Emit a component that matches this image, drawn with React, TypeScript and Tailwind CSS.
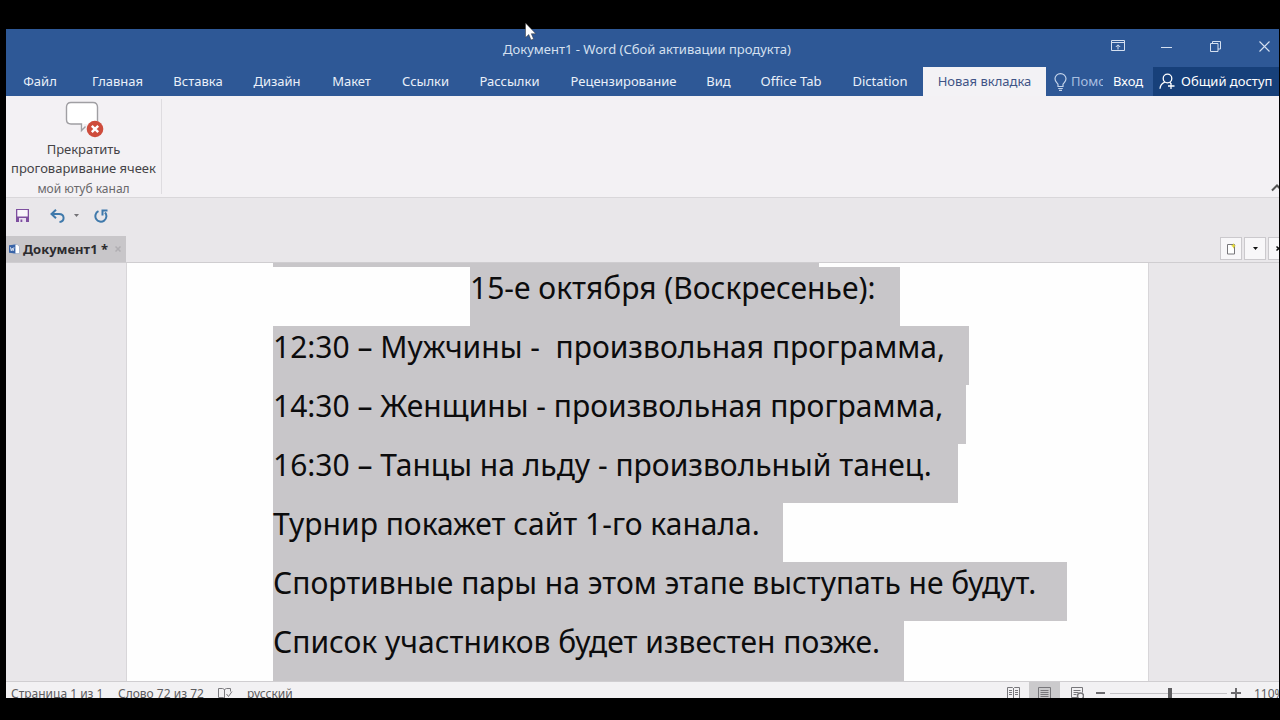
import { useState } from "react";

const tabs = [
  { name: "Файл", width: "w-[68px] mr-[3px]" },
  { name: "Главная", width: "w-[81px]" },
  { name: "Вставка", width: "w-[80px]" },
  { name: "Дизайн", width: "w-[78px]" },
  { name: "Макет", width: "w-[71px]" },
  { name: "Ссылки", width: "w-[77px]" },
  { name: "Рассылки", width: "w-[91px]" },
  { name: "Рецензирование", width: "w-[137px]" },
  { name: "Вид", width: "w-[53px]" },
  { name: "Office Tab", width: "w-[92px]" },
  { name: "Dictation", width: "w-[86px]" },
  { name: "Новая вкладка", width: "w-[123px]" },
];

const lines = [
  { text: "15-е октября (Воскресенье):", box: "ml-[197px] w-[430px]" },
  { text: "12:30 – Мужчины -  произвольная программа,", box: "w-[696px]" },
  { text: "14:30 – Женщины - произвольная программа,", box: "w-[693px]" },
  { text: "16:30 – Танцы на льду - произвольный танец.", box: "w-[685px]" },
  { text: "Турнир покажет сайт 1-го канала.", box: "w-[510px]" },
  { text: "Спортивные пары на этом этапе выступать не будут.", box: "w-[794px]" },
  { text: "Список участников будет известен позже.", box: "w-[631px]" },
];

function TitleBar() {
  return (
    <header className="relative flex h-[38px] shrink-0 items-start justify-end text-[#d5e0f0]">
      <h1 className="absolute inset-x-0 top-[10px] pl-[9px] text-center text-[13px] leading-5">
        Документ1 - Word (Сбой активации продукта)
      </h1>
      <div className="relative flex">
        <button aria-label="Параметры отображения ленты" className="flex h-[34px] w-[49px] items-center justify-center">
          <svg width="14" height="12" viewBox="0 0 14 12" fill="none" stroke="currentColor">
            <path d="M.5.5h13v10H.5zM.5 2.500h13M7 9.500V5M4.800 7 7 4.800l2.200 2.200" />
          </svg>
        </button>
        <button aria-label="Свернуть" className="flex h-[34px] w-[49px] items-center justify-center">
          <svg width="11" height="11" viewBox="0 0 11 11" stroke="currentColor">
            <path d="M0 6.500h11" />
          </svg>
        </button>
        <button aria-label="Свернуть в окно" className="flex h-[34px] w-[49px] items-center justify-center">
          <svg width="11" height="11" viewBox="0 0 11 11" fill="none" stroke="currentColor">
            <path d="M.5 2.500h7.500v8H.5zM2.500 2.500v-2h8v7.500H8" />
          </svg>
        </button>
        <button aria-label="Закрыть" className="flex h-[34px] w-[39px] items-center justify-end pr-[9px] pl-[19px]">
          <svg width="11" height="11" viewBox="0 0 11 11" stroke="currentColor" strokeWidth="1.1">
            <path d="M.5.5l10 10M10.500.5l-10 10" />
          </svg>
        </button>
      </div>
    </header>
  );
}

function TabBar() {
  const [active, setActive] = useState("Новая вкладка");
  return (
    <nav className="flex h-[29px] shrink-0 overflow-hidden text-[13px] whitespace-nowrap text-white">
      {tabs.map((t) => (
        <button
          key={t.name}
          onClick={() => setActive(t.name)}
          className={
            "shrink-0 text-center " + t.width + (active === t.name ? " bg-[#f3f2f5] text-[#3f5486]" : " text-[#eaf0f9]")
          }
        >
          {t.name}
        </button>
      ))}
      <button className="ml-auto flex w-[60px] shrink-0 items-center gap-1 pl-[8px] text-[#a9bfe0]">
        <svg className="shrink-0" width="13" height="18" viewBox="0 0 13 18" fill="none" stroke="#c3d3ea" strokeWidth="1.2">
          <path d="M4 13.500v-2C3.800 10 1 9 1 5.800a5.500 5.200 0 0 1 11 0C12 9 9.200 10 9 11.500v2zM4.200 15.500h4.600M5 17.400h3" />
        </svg>
        <span className="w-8 overflow-hidden text-left">Помо</span>
      </button>
      <button className="ml-[7px] w-[33px] shrink-0 text-left">Вход</button>
      <button className="ml-[7px] flex w-[126px] shrink-0 items-center gap-[6px] bg-[#17407a] pl-[6px]">
        <svg width="16" height="17" viewBox="0 0 16 17" fill="none" stroke="currentColor" strokeWidth="1.300">
          <circle cx="8.500" cy="5.500" r="4.300" />
          <path d="M1 15.800c.3-3.800 2-5.500 4.800-6.600M10.800 9l1 1.600M12 10v6M9 13h6.500" />
        </svg>
        Общий доступ
      </button>
    </nav>
  );
}

function Ribbon() {
  return (
    <section className="flex h-[102px] shrink-0 items-stretch justify-between border-b border-[#d9d7da] bg-[#f3f1f4]">
      <div className="my-[3px] flex w-[156px] flex-col items-center border-r border-[#dedce0] whitespace-nowrap">
        <button className="flex flex-col items-center text-[13px] leading-[19px] text-[#444346]">
          <svg className="mb-[2px]" width="40" height="39" viewBox="0 0 40 39">
            <path
              d="M7 3.500h22q4.500 0 4.500 4.500v12.500q0 4.500-4.500 4.500h-9.500v6.500q-2-1-3-6.500H7Q2.500 25 2.500 20.500V8Q2.500 3.500 7 3.500z"
              fill="#fff"
            />
            <path
              d="M33.500 22V8Q33.500 3.500 29 3.500H7Q2.500 3.500 2.500 8v12.500Q2.500 25 7 25h10.500v6.500l4-4"
              fill="none"
              stroke="#a09fa3"
              strokeWidth="1.400"
            />
            <circle cx="31" cy="30" r="8.300" fill="#ce4c3c" />
            <path d="M27.800 26.800l6.400 6.400M34.200 26.800l-6.400 6.400" stroke="#fff" strokeWidth="2.400" />
          </svg>
          <span>Прекратить</span>
          <span>проговаривание ячеек</span>
        </button>
        <span className="pt-px text-[12px] leading-5 text-[#69686b]">мой ютуб канал</span>
      </div>
      <button aria-label="Свернуть ленту" className="flex w-[8px] items-end overflow-hidden pb-[5px]">
        <svg className="shrink-0" width="12" height="9" viewBox="0 0 12 9" fill="none" stroke="#555" strokeWidth="2">
          <path d="M1 7.500l5-5 5 5" />
        </svg>
      </button>
    </section>
  );
}

function QuickAccess() {
  return (
    <div className="flex h-[38px] shrink-0 items-center pb-[3px] pl-[10px]">
      <button aria-label="Сохранить">
        <svg width="13" height="13" viewBox="0 0 13 13">
          <path d="M0 0h13v13H0z" fill="#7e4f9f" />
          <path d="M1.300 1h10.400v6.500H1.300z" fill="#f8f5fa" />
          <path d="M3 9h7v4H3z" fill="#e9e0ef" />
          <path d="M4.500 10.500h1.800V13H4.500z" fill="#7e4f9f" />
        </svg>
      </button>
      <button aria-label="Отменить" className="ml-[21px]">
        <svg width="15" height="14" viewBox="0 0 15 14" fill="none" stroke="#3f79ab" strokeWidth="2">
          <path d="M1.500 5h7.500c6 0 6 7.500.5 8M6 .7 1.500 5 6 9.300" />
        </svg>
      </button>
      <button aria-label="Варианты отмены" className="ml-[9px]">
        <svg width="5" height="3" viewBox="0 0 5 3">
          <path d="M0 0h5L2.500 3z" fill="#737276" />
        </svg>
      </button>
      <button aria-label="Повторить" className="ml-[15px]">
        <svg width="14" height="14" viewBox="0 0 14 14" fill="none" stroke="#3f79ab" strokeWidth="2">
          <path d="M4.500 2.200a5.500 5.500 0 1 0 6.500 1.300" />
          <path d="M8.500 6.500V1.500h5" />
        </svg>
      </button>
    </div>
  );
}

function DocumentTabs() {
  return (
    <div className="flex h-[27px] shrink-0 items-stretch justify-between border-b border-[#cfcdd0]">
      <div className="flex w-[120px] items-center bg-[#c8c6c9] pl-[3px] whitespace-nowrap">
        <svg className="shrink-0" width="11" height="12" viewBox="0 0 12 12">
          <path d="M5 1h4l2.500 2.500V11H5z" fill="#fff" stroke="#a9b6cc" />
          <path d="M0 2l7-1v10l-7-1z" fill="#3964a8" />
          <path d="M1.500 4l1 4 1-3 1 3 1-4" fill="none" stroke="#fff" strokeWidth=".8" />
        </svg>
        <a href="#document" className="ml-[3px] pt-px text-[13px] font-bold text-[#2c2b2e]">
          Документ1 *
        </a>
        <button aria-label="Закрыть вкладку" className="ml-auto pr-[5px]">
          <svg width="6" height="6" viewBox="0 0 6 6" stroke="#b0aeb2" strokeWidth="1.500">
            <path d="M.5.5l5 5M5.500.5l-5 5" />
          </svg>
        </button>
      </div>
      <div className="flex items-start gap-[2px] overflow-hidden pt-px">
        <button aria-label="Новый документ" className="flex h-[23px] w-[22px] items-center justify-center border border-[#cbc9cd] bg-[#f8f7f9]">
          <svg width="10" height="12" viewBox="0 0 10 12">
            <path d="M1.500 1.500h7v9.500h-7z" fill="#fff" stroke="#77767a" />
            <path d="M7.500 0l.8 2 1.700.8-1.700.9-.8 2-.8-2-1.700-.9 1.700-.8z" fill="#e2d73c" />
          </svg>
        </button>
        <button aria-label="Список документов" className="flex h-[23px] w-[22px] items-center justify-center border border-[#cbc9cd] bg-[#f8f7f9]">
          <svg width="5" height="3" viewBox="0 0 5 3">
            <path d="M0 0h5L2.500 3z" fill="#111" />
          </svg>
        </button>
        <button aria-label="Закрыть" className="flex h-[23px] w-[11px] items-center overflow-hidden border-y border-l border-[#cbc9cd] bg-[#f8f7f9] pl-[7px]">
          <svg className="shrink-0" width="5" height="5" viewBox="0 0 5 5" stroke="#111" strokeWidth="1.500">
            <path d="M.5.5l4 4M4.500.5l-4 4" />
          </svg>
        </button>
      </div>
    </div>
  );
}

function Page() {
  return (
    <main className="flex min-h-0 flex-1 overflow-hidden pr-[130px] pl-[120px]">
      <article
        id="document"
        className="flex-1 border-x border-[#d8d6d9] bg-[#fefefe] pl-[146px] text-[30px] leading-[42px] whitespace-pre text-[#0c0c0d]"
      >
        <div className="h-[4px] w-[546px] bg-[#c8c6c9]" />
        {lines.map((l) => (
          <p key={l.text} className={"h-[59px] bg-[#c8c6c9] " + l.box}>
            {l.text}
          </p>
        ))}
        <div className="h-[59px] w-[631px] bg-[#c8c6c9]" />
      </article>
    </main>
  );
}

function StatusBar() {
  return (
    <footer className="flex h-[17px] shrink-0 items-start overflow-hidden border-t border-[#d0ced1] bg-[#f2f1f3] text-[12px] leading-6 whitespace-nowrap text-[#5c5b5e]">
      <span className="w-[107px] pl-[5px]">Страница 1 из 1</span>
      <span className="w-[105px] pl-[5px]">Слово 72 из 72</span>
      <svg className="mt-[5px] shrink-0" width="15" height="14" viewBox="0 0 15 14" fill="none" stroke="#7b7a7e">
        <path d="M6.500 2.500v9M.5 1.500h4l2 1 2-1h4v3M.5 1.500v9h5l1 1M8.500 7l2 2.500 3.500-5" />
      </svg>
      <span className="ml-[14px]">русский</span>
      <div className="ml-auto flex items-start">
        <button aria-label="Режим чтения" className="flex h-6 w-[32px] justify-center pt-[5px]">
          <svg width="13" height="12" viewBox="0 0 13 12" fill="none" stroke="#77767a">
            <path d="M.5.5h5l1 1 1-1h5v11H.5zM6.500 1v11M2 3.500h3M2 5.500h3M2 7.500h3M8 3.500h3M8 5.500h3M8 7.500h3" />
          </svg>
        </button>
        <button aria-label="Разметка страницы" className="flex h-6 w-[31px] justify-center bg-[#cbcacc] pt-[5px]">
          <svg width="13" height="12" viewBox="0 0 13 12" fill="none" stroke="#77767a">
            <path d="M.5.5h12v12H.5zM2.500 3.500h8M2.500 5.500h8M2.500 7.500h8M2.500 9.500h8" />
          </svg>
        </button>
        <button aria-label="Веб-документ" className="flex h-6 w-[34px] justify-center pt-[5px]">
          <svg width="13" height="12" viewBox="0 0 13 12" fill="none" stroke="#77767a">
            <path d="M6 10.500H.5V.5h11v5M2.500 3.500h7M2.500 5.500h5M2.500 7.500h3" />
            <circle cx="9.500" cy="9" r="3" strokeWidth="1.500" />
          </svg>
        </button>
        <button aria-label="Уменьшить" className="flex h-6 w-[12px] justify-center pt-[10px]">
          <svg width="9" height="2" viewBox="0 0 9 2">
            <path d="M0 0h9v2H0z" fill="#6b6a6d" />
          </svg>
        </button>
        <input
          type="range"
          aria-label="Масштаб"
          min="10"
          max="210"
          defaultValue="112"
          className="mx-[4px] mt-[5px] h-[12px] w-[117px] appearance-none bg-[linear-gradient(#c3c2c5,#c3c2c5)] bg-[length:100%_1px] bg-center bg-no-repeat [&::-webkit-slider-thumb]:h-[11px] [&::-webkit-slider-thumb]:w-[4px] [&::-webkit-slider-thumb]:appearance-none [&::-webkit-slider-thumb]:bg-[#5f5e61]"
        />
        <button aria-label="Увеличить" className="flex h-6 w-[10px] justify-center pt-[6px]">
          <svg width="10" height="10" viewBox="0 0 10 10" stroke="#6b6a6d" strokeWidth="2">
            <path d="M0 5h10M5 0v10" />
          </svg>
        </button>
        <span className="ml-[13px] w-[25px] overflow-hidden">110%</span>
      </div>
    </footer>
  );
}

export default function App() {
  return (
    <div className="relative flex h-screen flex-col overflow-hidden bg-black pt-[29px] pr-px pb-[22px] pl-[6px] font-['Noto_Sans',sans-serif]">
      <div className="flex min-h-0 flex-1 flex-col overflow-hidden bg-[#e9e7ea]">
        <div className="bg-[#2e5896]">
          <TitleBar />
          <TabBar />
        </div>
        <Ribbon />
        <QuickAccess />
        <DocumentTabs />
        <Page />
        <StatusBar />
      </div>
      <svg className="absolute top-[22px] left-[525px]" width="12" height="19" viewBox="0 0 12 18">
        <path d="M.5.500v14.500l3.300-3 2.200 5.500 2.600-1-2.300-5.300h4.500z" fill="#fff" stroke="#333" strokeWidth=".5" />
      </svg>
    </div>
  );
}
